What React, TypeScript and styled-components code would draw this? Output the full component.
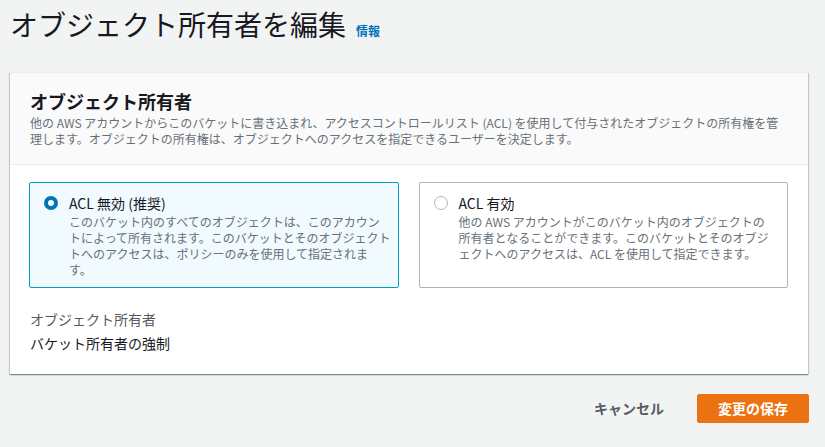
import React, { useState } from "react";
import styled, { createGlobalStyle } from "styled-components";

const GlobalStyle = createGlobalStyle`
  body {
    margin: 0;
    background: #f2f3f3;
    font-family: "Noto Sans CJK JP", "Noto Sans", sans-serif;
    color: #16191f;
  }
`;

type Option = {
  id: string;
  label: string;
  lines: string[];
};

const options: Option[] = [
  {
    id: "disabled",
    label: "ACL 無効 (推奨)",
    lines: [
      "このバケット内のすべてのオブジェクトは、このアカウン",
      "トによって所有されます。このバケットとそのオブジェクト",
      "トへのアクセスは、ポリシーのみを使用して指定されま",
      "す。",
    ],
  },
  {
    id: "enabled",
    label: "ACL 有効",
    lines: [
      "他の AWS アカウントがこのバケット内のオブジェクトの",
      "所有者となることができます。このバケットとそのオブジ",
      "ェクトへのアクセスは、ACL を使用して指定できます。",
    ],
  },
];

const headerLines = [
  "他の AWS アカウントからこのバケットに書き込まれ、アクセスコントロールリスト (ACL) を使用して付与されたオブジェクトの所有権を管",
  "理します。オブジェクトの所有権は、オブジェクトへのアクセスを指定できるユーザーを決定します。",
];

const Lines = ({ lines }: { lines: string[] }) => (
  <>
    {lines.map((l, i) => (
      <React.Fragment key={i}>
        {l}
        {i < lines.length - 1 && <br />}
      </React.Fragment>
    ))}
  </>
);

function App() {
  const [selected, setSelected] = useState("disabled");

  return (
    <>
      <GlobalStyle />
      <S.Page>
        <S.TitleRow>
          <S.Title>オブジェクト所有者を編集</S.Title>
          <S.InfoLink href="#">情報</S.InfoLink>
        </S.TitleRow>

        <S.Card>
          <S.CardHeader>
            <S.Heading>オブジェクト所有者</S.Heading>
            <S.HeaderDesc>
              <Lines lines={headerLines} />
            </S.HeaderDesc>
          </S.CardHeader>

          <S.CardBody>
            <S.Tiles>
              {options.map((o) => {
                const active = selected === o.id;
                return (
                  <S.Tile
                    key={o.id}
                    $active={active}
                    onClick={() => setSelected(o.id)}
                  >
                    <S.Radio $active={active} />
                    <S.TileText>
                      <S.TileLabel>{o.label}</S.TileLabel>
                      <S.TileDesc>
                        <Lines lines={o.lines} />
                      </S.TileDesc>
                    </S.TileText>
                  </S.Tile>
                );
              })}
            </S.Tiles>

            <S.Field>
              <S.FieldLabel>オブジェクト所有者</S.FieldLabel>
              <S.FieldValue>バケット所有者の強制</S.FieldValue>
            </S.Field>
          </S.CardBody>
        </S.Card>

        <S.Footer>
          <S.LinkButton>キャンセル</S.LinkButton>
          <S.PrimaryButton>変更の保存</S.PrimaryButton>
        </S.Footer>
      </S.Page>
    </>
  );
}

const S = {
  Page: styled.div`
    padding: 6px 17px 0 10px;
  `,
  TitleRow: styled.div`
    display: flex;
    align-items: baseline;
    gap: 10px;
    margin-bottom: 30px;
  `,
  Title: styled.h1`
    margin: 0;
    font-size: 28px;
    line-height: 36px;
    font-weight: 400;
    color: #16191f;
  `,
  InfoLink: styled.a`
    font-size: 12px;
    font-weight: 700;
    color: #0073bb;
    text-decoration: none;
  `,
  Card: styled.div`
    width: 798px;
    background: #ffffff;
    border-top: 1px solid #eaeded;
    box-shadow: 0 1px 1px 0 rgba(0, 28, 36, 0.3),
      1px 1px 1px 0 rgba(0, 28, 36, 0.15),
      -1px 1px 1px 0 rgba(0, 28, 36, 0.15);
  `,
  CardHeader: styled.div`
    background: #fafafa;
    border-bottom: 1px solid #eaeded;
    padding: 17px 20px 17px 20px;
  `,
  Heading: styled.h2`
    margin: 0;
    font-size: 18px;
    line-height: 22px;
    font-weight: 700;
    color: #16191f;
  `,
  HeaderDesc: styled.p`
    margin: 3px 0 0;
    font-size: 12px;
    line-height: 16px;
    color: #687078;
    white-space: nowrap;
  `,
  CardBody: styled.div`
    padding: 17px 20px 20px 19px;
  `,
  Tiles: styled.div`
    display: grid;
    grid-template-columns: 1fr 1fr;
    gap: 20px;
  `,
  Tile: styled.div<{ $active: boolean }>`
    display: flex;
    gap: 11px;
    padding: 9px 6px 9px 14px;
    border: 1px solid ${(p) => (p.$active ? "#00a1c9" : "#aab7b8")};
    background: ${(p) => (p.$active ? "#f1faff" : "#ffffff")};
    border-radius: 2px;
    cursor: pointer;
  `,
  Radio: styled.span<{ $active: boolean }>`
    flex: none;
    box-sizing: border-box;
    width: 14px;
    height: 14px;
    margin-top: 4px;
    border-radius: 50%;
    background: #ffffff;
    border: ${(p) => (p.$active ? "4px solid #0073bb" : "1px solid #aab7b8")};
  `,
  TileText: styled.div`
    display: flex;
    flex-direction: column;
  `,
  TileLabel: styled.div`
    font-size: 14px;
    line-height: 22px;
    color: #16191f;
  `,
  TileDesc: styled.div`
    font-size: 12px;
    line-height: 16px;
    color: #687078;
    white-space: nowrap;
  `,
  Field: styled.div`
    margin-top: 20px;
    padding-left: 1px;
  `,
  FieldLabel: styled.div`
    font-size: 14px;
    line-height: 22px;
    color: #545b64;
  `,
  FieldValue: styled.div`
    margin-top: 2px;
    font-size: 14px;
    line-height: 22px;
    color: #16191f;
  `,
  Footer: styled.div`
    width: 799px;
    display: flex;
    justify-content: flex-end;
    align-items: center;
    gap: 12px;
    margin-top: 20px;
  `,
  LinkButton: styled.button`
    font-family: inherit;
    font-size: 14px;
    font-weight: 700;
    line-height: 21px;
    padding: 3px 20px;
    border: 1px solid transparent;
    background: transparent;
    color: #545b64;
    cursor: pointer;
  `,
  PrimaryButton: styled.button`
    font-family: inherit;
    font-size: 14px;
    font-weight: 700;
    line-height: 21px;
    padding: 3px 20px;
    border: 1px solid #ec7211;
    border-radius: 2px;
    background: #ec7211;
    color: #ffffff;
    cursor: pointer;
  `,
};

export default App;
